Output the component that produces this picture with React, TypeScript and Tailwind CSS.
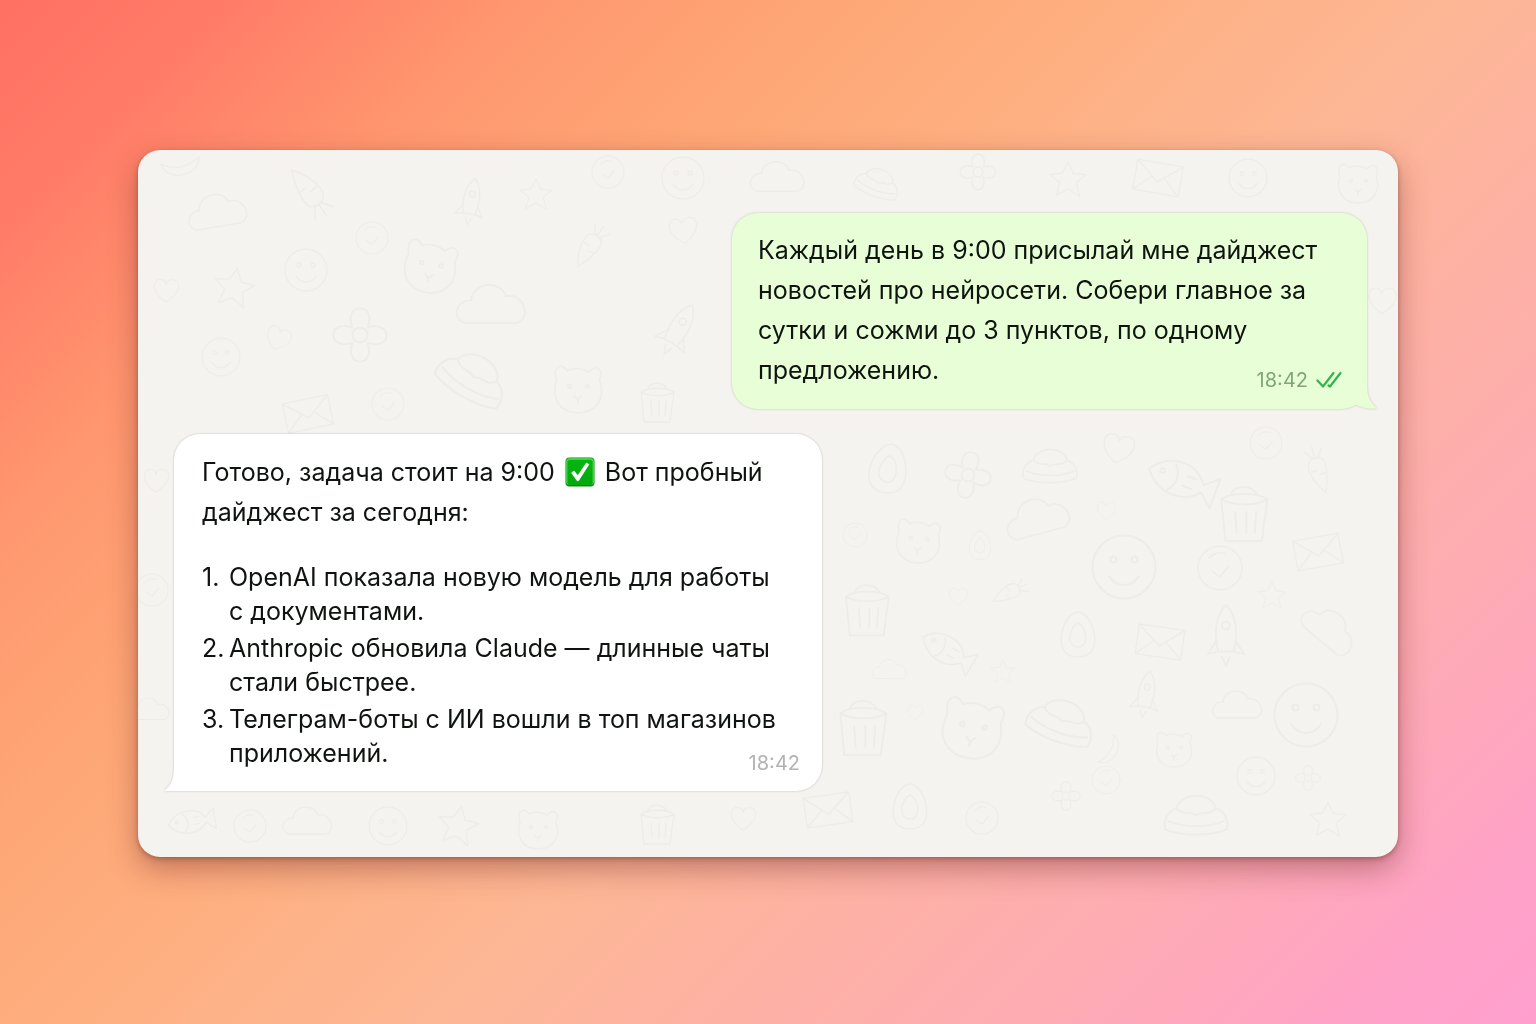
import type { ReactNode } from "react"

const news = [
  "OpenAI показала новую модель для работы с\u00a0документами.",
  "Anthropic обновила Claude — длинные чаты стали быстрее.",
  "Телеграм-боты с ИИ вошли в топ магазинов приложений.",
]

// [doodle, x, y, scale, rotate]
const doodles: [string, number, number, number, number][] = [
  ["crescent", 42, 14, 1, 80],
  ["cloud", 80, 62, 1.2, -10],
  ["carrot", 172, 42, 1.2, 140],
  ["star", 96, 138, 1, 10],
  ["smile", 168, 120, 1, 0],
  ["ring", 234, 88, 0.8, 0],
  ["bear", 292, 118, 1.3, 10],
  ["rocket", 333, 52, 1, 10],
  ["heart", 28, 140, 0.8, 0],
  ["cloud", 354, 156, 1.4, 0],
  ["smile", 83, 207, 0.9, 0],
  ["flower", 222, 185, 1.5, 0],
  ["heart", 140, 188, 0.8, 20],
  ["cake", 336, 226, 1.6, 30],
  ["envelope", 170, 264, 1, -12],
  ["ring", 250, 254, 0.8, 0],
  ["star", 398, 45, 0.8, 0],
  ["carrot", 452, 96, 1, 30],
  ["ring", 470, 22, 0.8, 0],
  ["heart", 545, 80, 0.9, -10],
  ["bear", 440, 240, 1.2, 0],
  ["rocket", 540, 180, 1.2, 30],
  ["cup", 520, 254, 1, 0],
  ["smile", 545, 28, 1, 0],
  ["cloud", 640, 28, 1.1, 0],
  ["cake", 740, 32, 1, 20],
  ["flower", 840, 22, 1, 0],
  ["star", 930, 30, 0.9, 0],
  ["envelope", 1020, 28, 1, 10],
  ["smile", 1110, 28, 0.9, 0],
  ["bear", 1220, 34, 1, 0],
  ["heart", 1244, 150, 0.9, 0],
  ["egg", 750, 320, 1.2, 10],
  ["flower", 830, 325, 1.3, 10],
  ["cake", 912, 315, 1.2, 0],
  ["heart", 980, 298, 1, 10],
  ["fish", 1042, 330, 1.5, 20],
  ["ring", 1128, 293, 0.8, 0],
  ["carrot", 1180, 320, 1, -20],
  ["cup", 1107, 366, 1.4, 0],
  ["ring", 717, 385, 0.6, 0],
  ["bear", 780, 392, 1.1, 5],
  ["egg", 842, 396, 0.7, 0],
  ["cloud", 900, 368, 1.3, -15],
  ["heart", 968, 360, 0.6, 0],
  ["smile", 986, 417, 1.5, 0],
  ["ring", 1082, 418, 1.1, 0],
  ["envelope", 1180, 402, 1, -10],
  ["cup", 730, 462, 1.3, 0],
  ["heart", 820, 446, 0.6, 0],
  ["fish", 808, 500, 1.2, 30],
  ["carrot", 872, 442, 0.8, 60],
  ["egg", 940, 486, 1.1, 0],
  ["envelope", 1022, 492, 1, 8],
  ["rocket", 1088, 486, 1.3, 0],
  ["star", 1134, 446, 0.7, 0],
  ["cloud", 1192, 480, 1.2, 40],
  ["cloud", 752, 520, 0.7, 0],
  ["star", 865, 522, 0.6, 0],
  ["cup", 726, 580, 1.4, 0],
  ["heart", 777, 562, 0.5, 0],
  ["bear", 834, 580, 1.5, 10],
  ["cake", 924, 570, 1.5, 20],
  ["crescent", 970, 600, 0.8, 30],
  ["rocket", 1008, 545, 1, 10],
  ["cloud", 1100, 556, 1, 0],
  ["smile", 1168, 565, 1.5, 0],
  ["ring", 968, 630, 0.7, 0],
  ["bear", 1036, 600, 0.9, 0],
  ["smile", 1118, 626, 0.9, 0],
  ["flower", 1170, 628, 0.7, 0],
  ["egg", 772, 658, 1.1, 0],
  ["ring", 844, 668, 0.8, 0],
  ["envelope", 690, 660, 1, -8],
  ["flower", 928, 646, 0.8, 0],
  ["cake", 1058, 664, 1.4, 0],
  ["star", 1190, 670, 0.9, 0],
  ["heart", 605, 668, 0.8, 0],
  ["cup", 520, 676, 1, 0],
  ["bear", 400, 680, 1, 0],
  ["star", 320, 676, 1, 10],
  ["smile", 250, 676, 0.9, 0],
  ["cloud", 170, 672, 1, 0],
  ["ring", 112, 676, 0.8, 0],
  ["fish", 52, 672, 1, -10],
  ["heart", 18, 330, 0.8, 0],
  ["ring", 14, 440, 0.8, 0],
  ["cloud", 12, 560, 0.8, 0],
]

function DoodleBackground() {
  return (
    <svg
      aria-hidden="true"
      className="absolute inset-0 h-full w-full text-[#edece8]"
      viewBox="0 0 1260 707"
      preserveAspectRatio="xMidYMid slice"
      fill="none"
      stroke="currentColor"
      strokeWidth="1.3"
      strokeLinecap="round"
      strokeLinejoin="round"
    >
      <defs>
        <g id="smile">
          <circle r="21" />
          <circle cx="-7" cy="-5" r="2" />
          <circle cx="7" cy="-5" r="2" />
          <path d="M-10 6C-5 14 5 14 10 6" />
        </g>
        <g id="ring">
          <circle r="20" />
          <path d="M-10 -9C-6 -14 1 -15 5 -13M-7 3L0 8L8 -2" />
        </g>
        <g id="bear">
          <path d="M-18 -8C-22 -20 -13 -23 -9 -16C-3 -19 4 -18 9 -15C15 -22 22 -17 18 -8C24 10 12 19 0 19C-14 19 -23 8 -18 -8Z" />
          <circle cx="-7" cy="-3" r="1.5" />
          <circle cx="8" cy="-3" r="1.5" />
          <path d="M-3 5L0 8L3 5M0 8V11" />
        </g>
        <g id="star">
          <path d="M0 -20L6 -7L20 -6L9 3L13 18L0 10L-13 17L-9 3L-20 -6L-6 -8Z" />
        </g>
        <g id="heart">
          <path d="M0 15C-22 1 -15 -16 -5 -13C-2 -12 0 -9 0 -7C2 -15 15 -15 16 -5C16 4 8 10 0 15Z" />
        </g>
        <g id="cloud">
          <path d="M-20 12C-30 7 -24 -5 -15 -4C-14 -17 6 -19 10 -7C22 -10 29 8 18 12Z" />
        </g>
        <g id="carrot">
          <path d="M0 24C-9 10 -11 -5 -6 -10C-2 -14 5 -13 8 -9C11 -3 6 12 0 24ZM-1 -12L-7 -22M1 -12L2 -24M4 -11L11 -20M-7 0H-1M7 5H1" />
        </g>
        <g id="rocket">
          <path d="M0 -24C9 -15 9 0 6 12H-6C-9 0 -9 -15 0 -24ZM-7 3L-14 14L-6 12M7 3L14 14L6 12M-3 16L0 23L3 16" />
          <circle cy="-8" r="3" />
        </g>
        <g id="flower">
          <circle r="5" />
          <path d="M-5 -5C-12 -22 12 -22 5 -5C22 -10 22 11 5 5C11 22 -11 22 -5 5C-22 11 -22 -11 -5 -5Z" />
        </g>
        <g id="cake">
          <path d="M-22 11C-24 2 -18 -3 -14 -4C-11 -16 12 -16 14 -4C19 -3 24 3 22 11C10 16 -10 16 -22 11ZM-14 -4C-8 2 -4 -3 0 1C5 -3 9 2 14 -4M-20 5C-8 10 9 10 20 5" />
        </g>
        <g id="envelope">
          <path d="M-23 -15H23V15H-23ZM-23 -15L0 4L23 -15M-23 15L-7 0M23 15L7 0" />
        </g>
        <g id="cup">
          <path d="M-17 -12L-14 18H12L16 -12C8 -17 -9 -17 -17 -12ZM-17 -12C-8 -7 8 -7 16 -12M-7 -3L-6 12M1 -3V12M8 -3L7 12M-10 -16C-6 -23 5 -22 9 -15" />
        </g>
        <g id="egg">
          <path d="M0 -22C12 -20 19 2 13 13C8 21 -8 21 -13 13C-19 2 -12 -20 0 -22Z" />
          <path d="M0 -12C7 -8 9 3 5 8C2 12 -5 10 -7 5C-9 -2 -4 -10 0 -12Z" />
        </g>
        <g id="fish">
          <path d="M-22 0C-12 -15 8 -15 16 -2L25 -10V11L16 3C6 15 -12 13 -22 0ZM-6 -9C-1 -3 -1 4 -6 9M4 -4H10M3 3H9" />
          <circle cx="-13" cy="-2" r="1.5" />
        </g>
        <g id="crescent">
          <path d="M-4 -20C15 -18 17 15 -3 19C5 8 5 -8 -4 -20Z" />
        </g>
      </defs>
      {doodles.map(([shape, x, y, scale, rotate], i) => (
        <use key={i} href={`#${shape}`} transform={`translate(${x} ${y}) rotate(${rotate}) scale(${scale})`} />
      ))}
    </svg>
  )
}

function CheckEmoji() {
  return (
    <svg role="img" aria-label="Готово" className="mx-[3px] -mt-1 inline-block h-[30px] w-[30px] align-middle" viewBox="0 0 30 30" fill="none">
      <defs>
        <linearGradient id="emoji-fill" x1="0" y1="0" x2="0" y2="1">
          <stop offset="0" stopColor="#06b512" />
          <stop offset="1" stopColor="#02a90b" />
        </linearGradient>
      </defs>
      <rect x="0.5" y="0.5" width="29" height="29" rx="4" fill="#068d0e" />
      <rect x="1" y="1" width="28" height="27" rx="3.5" fill="#45cf48" />
      <rect x="2.5" y="3" width="25" height="25" rx="2.5" fill="url(#emoji-fill)" />
      <path d="M6.6 15.8L9 14L12.8 18.8L21.4 6L23.8 7.4L13.4 23.8H12.2Z" fill="#fff" stroke="#fff" strokeWidth="0.8" strokeLinejoin="round" />
    </svg>
  )
}

function ReadTicks() {
  return (
    <svg aria-hidden="true" className="h-[18px] w-[26px]" viewBox="0 0 26 18" fill="none" stroke="#35b34c" strokeWidth="2.2" strokeLinecap="round" strokeLinejoin="round">
      <path d="M1.5 9.5L7 15.5L17.5 2" />
      <path d="M12.5 14.5L14 15.5L24.5 2" />
    </svg>
  )
}

function Bubble({ outgoing = false, children }: { outgoing?: boolean; children: ReactNode }) {
  return (
    <article
      className={
        outgoing
          ? "relative w-full max-w-[635px] self-end rounded-[26px] bg-[#e7fed6] px-[26px] pt-[17px] pb-[19px] drop-shadow-[0_0_1px_rgba(70,100,50,0.3)]"
          : "relative w-full max-w-[648px] self-start rounded-[26px] bg-white px-7 pt-[18px] pb-[21px] drop-shadow-[0_0_1px_rgba(80,80,70,0.3)]"
      }
    >
      <svg
        aria-hidden="true"
        className={outgoing ? "absolute -right-[10px] bottom-0 h-7 w-10 -scale-x-100" : "absolute -left-[10px] bottom-0 h-7 w-10"}
        viewBox="0 0 40 28"
      >
        {outgoing ? (
          <path d="M10 0C10 14 9 19 0 27.5C8 28 14 27 18 25L32 20L20 0Z" fill="#e7fed6" />
        ) : (
          <path d="M10 0C10 14 9 21 0 28H40L20 0Z" fill="#fff" />
        )}
      </svg>
      <div className="relative">{children}</div>
    </article>
  )
}

export default function App() {
  return (
    <main className="min-h-screen bg-[linear-gradient(135deg,#ff7063_0%,#ff7c68_9%,#ff966f_20%,#fea675_32%,#feaf80_43%,#fdb795_57%,#fdb1a4_68%,#feacb3_80%,#ffa2c6_92%,#ff9fcf_100%)] px-6 py-[150px] font-['Inter','Liberation_Sans',sans-serif] text-[#101410]">
      <section
        aria-label="Чат"
        className="relative mx-auto w-full max-w-[1260px] overflow-hidden rounded-[22px] bg-[#f4f3ef] shadow-[0_2px_5px_rgba(100,40,30,0.4),0_12px_30px_rgba(110,40,40,0.42)]"
      >
        <DoodleBackground />
        <div className="relative flex flex-col gap-[25px] pt-[63px] pr-[31px] pb-[66px] pl-9">
          <Bubble outgoing>
            <p className="text-[25px] leading-10">
              Каждый день в 9:00 присылай мне дайджест новостей про нейросети. Собери главное за сутки и сожми до 3 пунктов, по одному предложению.
            </p>
            <div className="absolute -right-px -bottom-1 flex items-center gap-2 text-xl leading-7 text-[#82a577]">
              <time>18:42</time>
              <ReadTicks />
            </div>
          </Bubble>

          <Bubble>
            <p className="text-[25px] leading-10">
              Готово, задача стоит на 9:00 <CheckEmoji /> Вот пробный дайджест за сегодня:
            </p>
            <ol className="mt-7 flex flex-col gap-[3px] text-[25px] leading-[34px]">
              {news.map((item, i) => (
                <li key={item} className="flex">
                  <span className="w-[27px] shrink-0">{i + 1}.</span>
                  <span>{item}</span>
                </li>
              ))}
            </ol>
            <time className="absolute -right-[6px] -bottom-[7px] text-xl leading-7 text-[#b2b2b2]">18:42</time>
          </Bubble>
        </div>
      </section>
    </main>
  )
}
